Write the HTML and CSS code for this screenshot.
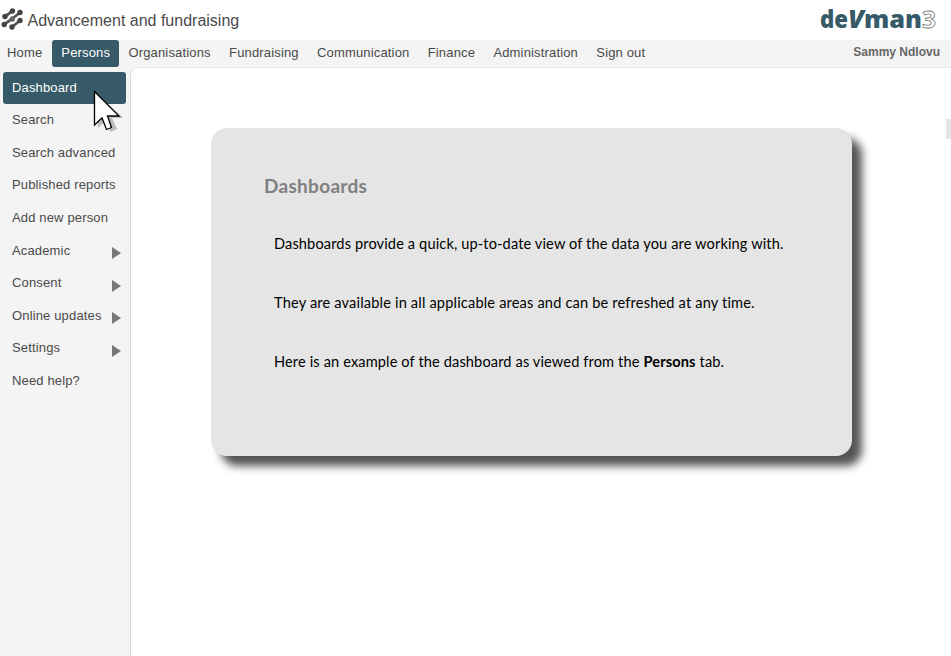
FILE: index.html
```html
<!DOCTYPE html>
<html lang="en">
<head>
<meta charset="utf-8">
<title>Advancement and fundraising</title>
<link rel="stylesheet" href="styles.css">
</head>
<body>
<header class="header">
  <svg class="mark" width="24" height="24" viewBox="0 0 24 24">
    <path d="M5 9.500L12.500 4M4 17.500L12 12L20 5.500M12 20L20 13.500" fill="none" stroke="#555" stroke-width="2.800"/>
    <g fill="#444"><circle cx="5" cy="9.500" r="2.700"/><circle cx="12.500" cy="4" r="2.700"/><circle cx="4.200" cy="17.500" r="2.700"/><circle cx="12.300" cy="12" r="2.700" fill="#666"/><circle cx="20" cy="5.500" r="2.700"/><circle cx="12" cy="20" r="2.700"/><circle cx="20" cy="13.500" r="2.700"/></g>
  </svg>
  <h1 class="title">Advancement and fundraising</h1>
  <svg class="logo" width="120" height="38" viewBox="0 0 120 38">
    <g class="logo-text">
      <text x="0" y="28" textLength="28" lengthAdjust="spacingAndGlyphs">de</text>
      <text class="logo-v" x="28" y="28" textLength="16" lengthAdjust="spacingAndGlyphs">V</text>
      <text x="44" y="28" textLength="58" lengthAdjust="spacingAndGlyphs">man</text>
      <text class="logo-three" x="102" y="28" textLength="14" lengthAdjust="spacingAndGlyphs">3</text>
    </g>
  </svg>
</header>
<nav class="nav">
  <a>Home</a><a class="active">Persons</a><a>Organisations</a><a>Fundraising</a><a>Communication</a><a>Finance</a><a>Administration</a><a>Sign out</a>
  <strong class="user">Sammy Ndlovu</strong>
</nav>
<div class="body">
  <aside class="side">
    <a class="active">Dashboard</a>
    <a>Search</a>
    <a>Search advanced</a>
    <a>Published reports</a>
    <a>Add new person</a>
    <a>Academic<i class="arrow"></i></a>
    <a>Consent<i class="arrow"></i></a>
    <a>Online updates<i class="arrow"></i></a>
    <a>Settings<i class="arrow"></i></a>
    <a>Need help?</a>
  </aside>
  <main class="main">
    <section class="card">
      <h2>Dashboards</h2>
      <p>Dashboards provide a quick, up-to-date view of the data you are working with.</p>
      <p class="wide">They are available in all applicable areas and can be refreshed at any time.</p>
      <p>Here is an example of the dashboard as viewed from the <b>Persons</b> tab.</p>
    </section>
    <span class="handle"></span>
  </main>
</div>
<svg class="cursor" width="34" height="46" viewBox="0 0 34 46">
  <path d="M5 5V38L12.500 31L17.500 42L24 39L19 28H30.500Z" fill="#777" opacity=".45"/>
  <path d="M1.500 1.500V35L9 28L13.500 39.500L18.500 37.500L14.500 26H26Z" fill="#fff" stroke="#000" stroke-width="1.300"/>
</svg>
</body>
</html>
```
FILE: styles.css
```css
* { box-sizing: border-box; }
body {
  margin: 0;
  height: 656px;
  display: flex;
  flex-direction: column;
  overflow: hidden;
  background: #fff;
  color: #4a4a4a;
  font: 13px/16px "Liberation Sans", Arial, sans-serif;
}
.header { height: 40px; display: flex; align-items: flex-start; flex: none; }
.mark { margin: 7px 3.500px 0 0; flex: none; }
.title { margin: 11px 0 0; font-size: 16px; line-height: 20px; font-weight: 400; white-space: nowrap; }
.logo { margin: 0 11px 0 auto; }
.logo-text { font: 800 24px "Open Sans", sans-serif; fill: #365a68; }
.logo-v { font-style: italic; }
.logo-three { font-weight: 700; fill: #fff; stroke: #777; stroke-width: .8px; }
.nav {
  height: 27px;
  flex: none;
  display: flex;
  padding-right: 11px;
  background: #f4f4f4;
}
.nav a { padding: 5px 9px 0; letter-spacing: .16px; white-space: nowrap; }
.nav a:first-child { padding-left: 7px; margin-right: 1px; }
.nav a:nth-child(n+3) { padding-left: 9.300px; }
.nav .active { background: #365a68; color: #fff; border-radius: 3px; }
.user { margin-left: auto; padding-top: 4px; font-size: 12px; color: #666; white-space: nowrap; }
.body { flex: 1; display: flex; background: #f4f4f4; }
.side { width: 130px; flex: none; padding: 5px 4px 0 3px; display: flex; flex-direction: column; }
.side a {
  height: 32.600px;
  padding: 0 5px 0 9px;
  display: flex;
  align-items: center;
  justify-content: space-between;
  letter-spacing: .15px;
  white-space: nowrap;
}
.side .active { height: 32px; background: #365a68; color: #fff; border-radius: 3px; }
.arrow {
  margin-top: 5px;
  border-left: 9.500px solid #777;
  border-top: 6px solid transparent;
  border-bottom: 6px solid transparent;
}
.main {
  position: relative;
  flex: 1;
  padding: 60px 0 0 80px;
  background: #fff;
  border: solid #d8d8d8;
  border-width: 1px 0 0 1px;
  border-top-color: #e8e8e8;
  border-top-left-radius: 7px;
}
.card {
  width: 641px;
  height: 328px;
  padding: 47px 0 0 53px;
  background: #e5e5e5;
  border-radius: 16px;
  box-shadow: 10px 10px 9px #555;
  color: #000;
  font: 14.600px/20px Lato, sans-serif;
  letter-spacing: .125px;
}
.card h2 { margin: 0 0 37px; font-size: 19px; line-height: 22px; letter-spacing: .3px; color: #808080; }
.card p { margin: 0 0 39px 10px; white-space: nowrap; }
.card .wide { letter-spacing: .17px; }
.handle { position: absolute; top: 51px; right: 0; width: 5px; height: 20px; background: #e5e5e5; }
.cursor { position: absolute; left: 93px; top: 90px; }
```
